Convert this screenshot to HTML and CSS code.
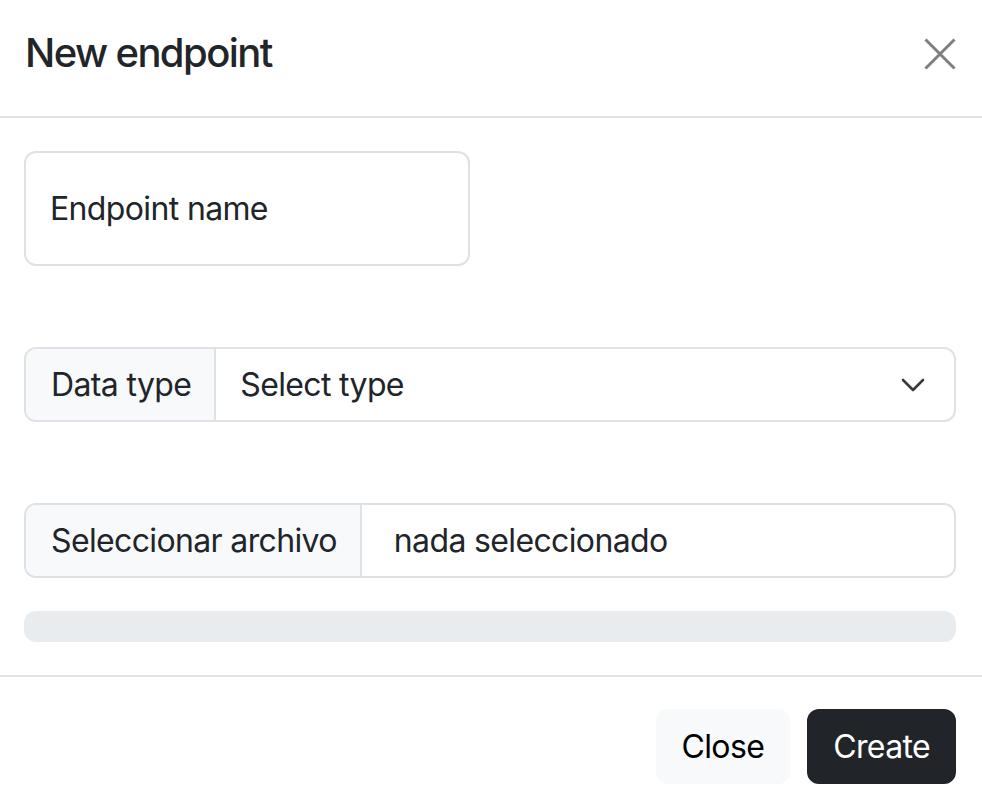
FILE: index.html
```html
<!DOCTYPE html>
<html lang="en">
<head>
<meta charset="utf-8">
<title>New endpoint</title>
<link rel="stylesheet" href="styles.css">
</head>
<body>
<div class="modal">
  <div class="modal-header">
    <h5 class="modal-title">New endpoint</h5>
    <button class="btn-close" type="button" aria-label="Close">
      <svg viewBox="0 0 32 32" width="32" height="32" aria-hidden="true">
        <path d="M1.5 1.5 L30.5 30.5 M30.5 1.5 L1.5 30.5" stroke="#7f7f7f" stroke-width="3" fill="none"/>
      </svg>
    </button>
  </div>
  <div class="modal-body">
    <div class="floating">
      <span class="floating-label">Endpoint name</span>
    </div>
    <div class="input-group group-select">
      <span class="group-text">Data type</span>
      <div class="select">
        <span>Select type</span>
        <svg class="chev" viewBox="0 0 24 14" width="24" height="14" aria-hidden="true">
          <path d="M2 2 L12 12 L22 2" stroke="#343a40" stroke-width="2.6" fill="none" stroke-linecap="round" stroke-linejoin="round"/>
        </svg>
      </div>
    </div>
    <div class="input-group group-file">
      <span class="group-text">Seleccionar archivo</span>
      <span class="file-name">nada seleccionado</span>
    </div>
    <div class="progress"></div>
  </div>
  <div class="modal-footer">
    <button class="btn btn-light" type="button">Close</button>
    <button class="btn btn-dark" type="button">Create</button>
  </div>
</div>
</body>
</html>
```
FILE: styles.css
```css
* { box-sizing: border-box; }
html, body { margin: 0; padding: 0; background: #fff; }
body {
  font-family: Inter, "Liberation Sans", sans-serif;
  color: #212529;
  font-size: 32px;
  line-height: 48px;
  letter-spacing: -0.02em;
}
.modal { width: 982px; height: 808px; background: #fff; overflow: hidden; }

.modal-header {
  display: flex;
  align-items: center;
  justify-content: space-between;
  height: 118px;
  padding: 24px 26px 34px 25px;
  border-bottom: 2px solid #dee2e6;
}
.modal-title {
  margin: 0;
  font-size: 40px;
  line-height: 60px;
  font-weight: 500;
  letter-spacing: -0.04em;
}
.btn-close {
  border: 0;
  background: transparent;
  padding: 0;
  width: 32px;
  height: 32px;
  display: flex;
  margin-top: 2px;
}

.modal-body { padding: 33px 26px 33px 24px; }

.floating {
  width: 446px;
  height: 115px;
  border: 2px solid #dee2e6;
  border-radius: 12px;
  display: flex;
  align-items: center;
  padding: 0 24px;
  margin-bottom: 81px;
}

.input-group {
  display: flex;
  height: 75px;
  border: 2px solid #dee2e6;
  border-radius: 12px;
  overflow: hidden;
}
.group-select { margin-bottom: 81px; }
.group-file { margin-bottom: 33px; }
.group-text {
  display: flex;
  align-items: center;
  background: #f8f9fa;
  padding: 0 23px 0 25px;
  border-right: 2px solid #dee2e6;
  white-space: nowrap;
}
.select {
  flex: 1;
  display: flex;
  align-items: center;
  justify-content: space-between;
  padding: 0 29px 0 24px;
}
.file-name {
  display: flex;
  align-items: center;
  padding-left: 32px;
}

.progress {
  height: 31px;
  background: #e9ecef;
  border-radius: 12px;
}

.modal-footer {
  display: flex;
  justify-content: flex-end;
  gap: 17px;
  padding: 32px 26px 0 24px;
  border-top: 2px solid #dee2e6;
}
.btn {
  font-family: inherit;
  font-size: 32px;
  line-height: 48px;
  letter-spacing: -0.02em;
  height: 75px;
  padding: 0 24px;
  border-radius: 12px;
  border: 2px solid transparent;
}
.btn-light { background: #f8f9fa; border-color: #f8f9fa; color: #000; }
.btn-dark { background: #212529; border-color: #212529; color: #fff; }
```
